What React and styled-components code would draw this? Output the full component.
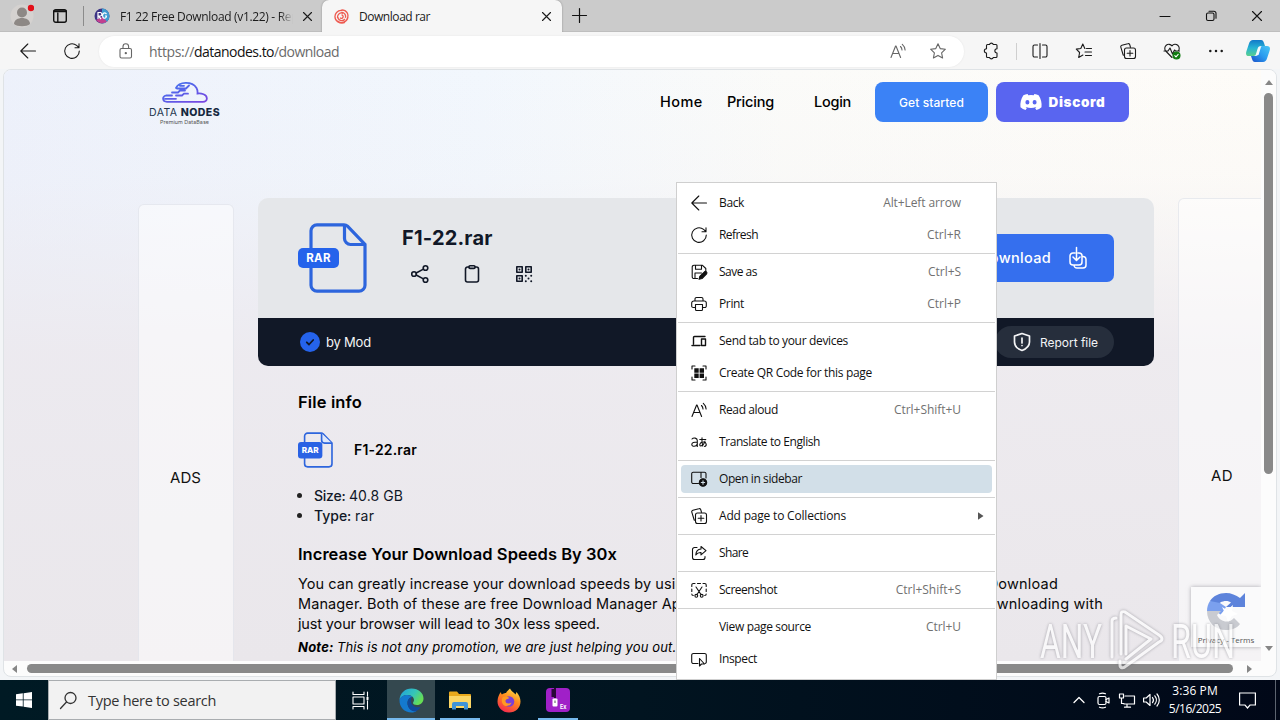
import React from "react";
import styled, { createGlobalStyle, css } from "styled-components";

const UI = '"Open Sans", "Noto Sans", sans-serif';
const GEO = 'Inter, "Open Sans", sans-serif';

const Global = createGlobalStyle`
  * { box-sizing: border-box; }
  body { margin: 0; background: #fff; overflow: hidden; }
  #root { width: 1280px; height: 720px; overflow: hidden; }
`;

/* ---------- shared ---------- */
const Screen = styled.div`
  position: relative; width: 1280px; height: 720px; display: flex; flex-direction: column;
  background: #f3f5f7; font-family: ${UI}; color: #111; overflow: hidden;
`;
const Slot = styled.div`
  width: ${(p) => p.$w}px; height: 100%; flex: none; display: flex; align-items: center; justify-content: center;
`;
const Label = styled.span`
  white-space: pre; letter-spacing: ${(p) => p.$ls || 0}px;
`;
const Svg = styled.svg`
  display: block; flex: none; overflow: visible; fill: none; stroke: currentColor;
  stroke-width: ${(p) => p.$sw || 1.1}; stroke-linecap: round; stroke-linejoin: round;
`;
const Icon = ({ s = 16, h, sw, children }) => (
  <Svg width={s} height={h || s} viewBox={`0 0 ${s} ${h || s}`} $sw={sw}>{children}</Svg>
);

/* ---------- tab strip ---------- */
const TabStrip = styled.div`
  height: 32px; flex: none; display: flex; background: #cbcbcb; border-bottom: 1px solid #bebebe;
`;
const StripLine = styled.div` width: 1px; height: 20px; margin: 0 0 0 -1px; background: #8b8b8b; `;
const Tab = styled.div`
  height: 32px; width: ${(p) => p.$w}px; flex: none; display: flex; align-items: center; font-size: 12px; color: #1b1b1b;
  padding-left: ${(p) => p.$pl}px; padding-right: ${(p) => p.$pr}px;
  ${(p) => p.$active && css` background: #f6f6f6; border-radius: 7px 7px 0 0; box-shadow: 0 0 2px rgba(0,0,0,.35); clip-path: inset(0 -3px 0 -3px); `}
`;
const TabTitle = styled.div`
  flex: 1; margin-left: 10px; overflow: hidden; white-space: nowrap;
  ${(p) => p.$fade && css` mask-image: linear-gradient(90deg, #000 92%, transparent); `}
`;
const WindowButtons = styled.div` margin-left: auto; display: flex; `;

/* ---------- toolbar ---------- */
const Toolbar = styled.div`
  height: 37px; flex: none; display: flex; align-items: center; background: #f6f6f6; color: #1b1b1b; padding: 2px 0 1px;
`;
const AddressBar = styled.div`
  width: 865px; height: 31px; margin-right: 5px; border-radius: 16px; background: #fff; display: flex; align-items: center;
  box-shadow: 0 0 2px rgba(0,0,0,.08); padding-left: 20px; color: #666; font-size: 14px;
`;
const Url = styled.div` margin-left: 16px; flex: 1; color: #6b6b6b; b { font-weight: 400; color: #111; } `;
const ToolLine = styled.div` width: 1px; height: 17px; margin: 0 0 0 1px; background: #cfcfcf; `;

/* ---------- page frame ---------- */
const Frame = styled.div`
  width: 1274px; height: 608px; flex: none; margin: 0 0 0 3px; border: 1px solid #dfe3e6; border-radius: 8px; background: #fcfcfc;
  overflow: hidden; display: grid; grid-template-columns: 1257px 15px; grid-template-rows: 591px 15px;
`;
const Page = styled.div`
  overflow: hidden; color: #000; font-family: ${GEO}; position: relative;
  background:
    linear-gradient(180deg, rgba(236,233,237,0) 0%, rgba(236,233,237,.12) 18%, rgba(236,233,238,.9) 48%, rgba(234,231,235,1) 100%),
    linear-gradient(90deg, #edf1fb 0%, #f2f7fd 38%, #fbfbf9 62%, #fefcf8 100%);
`;
const VBar = styled.div`
  display: flex; flex-direction: column; align-items: center; padding-top: 10px; background: #fcfcfc;
`;
const HBar = styled.div` display: flex; align-items: center; padding-left: 8px; `;
const Thumb = styled.div`
  background: #898989; border-radius: 5px; width: ${(p) => p.$w}px; height: ${(p) => p.$h}px; margin: ${(p) => p.$m};
`;
const Arrow = styled.div`
  width: 0; height: 0; border: 4.5px solid transparent;
  ${(p) => p.$d === "up" && css` border-top: 0; border-bottom: 5px solid #868686; `}
  ${(p) => p.$d === "down" && css` border-bottom: 0; border-top: 5px solid #868686; `}
  ${(p) => p.$d === "left" && css` border-left: 0; border-right: 5px solid #868686; `}
  ${(p) => p.$d === "right" && css` border-right: 0; border-left: 5px solid #868686; `}
`;

const SiteHeader = styled.header`
  width: 1125px; height: 64px; padding-left: 145px; display: flex; align-items: center;
`;
const Brand = styled.div`
  width: 71px; display: flex; flex-direction: column; align-items: center; margin-top: 3px;
`;
const BrandName = styled.div`
  font: 400 10.5px/12px ${GEO}; color: #24364e; white-space: nowrap; margin-top: 4px; b { font-weight: 800; color: #16283f; }
`;
const BrandTag = styled.div` font: 400 5.4px/7px ${GEO}; color: #555; white-space: nowrap; `;
const Nav = styled.nav` margin-left: auto; display: flex; align-items: center; font-size: 14.5px; font-weight: 500; `;
const NavLink = styled.a` margin: -2px ${(p) => p.$gap}px 0 0; white-space: nowrap; `;
const CtaButton = styled.a`
  width: ${(p) => p.$w}px; height: 40px; border-radius: 8px; background: ${(p) => p.$bg}; color: #fff; margin-right: ${(p) => p.$mr || 0}px;
  display: flex; align-items: center; justify-content: center; gap: 7px; font-size: 12px; font-weight: 500;
  b { font-size: 13.5px; font-weight: 900; margin-top: -1px; }
`;

const Columns = styled.div` display: flex; gap: 24px; align-items: flex-start; margin: 64px 0 0 134px; width: 1200px; `;
const AdPanel = styled.aside`
  width: 96px; height: ${(p) => p.$h}px; margin-top: ${(p) => p.$mt}px; flex: none; border-radius: 6px; display: flex; align-items: center;
  padding-left: ${(p) => p.$pl}px; font-size: 15px; color: #111; background: rgba(255,255,255,.52); border: 1px solid rgba(215,219,228,.55);
`;
const Main = styled.main` width: 896px; flex: none; `;
const Card = styled.section` border-radius: 10px; overflow: hidden; `;
const CardTop = styled.div`
  height: 120px; background: #e5e7ea; display: flex; align-items: flex-start; padding: 25px 40px 0; color: #111827;
`;
const FileHead = styled.div` margin: 2px 0 0 35px; `;
const FileTitle = styled.h1` margin: 0; font: 700 20px/26px ${GEO}; `;
const Actions = styled.div` display: flex; gap: 32px; padding: 13px 0 0 8px; `;
const DownloadButton = styled.a`
  width: 180px; height: 48px; margin: 11px 0 0 auto; border-radius: 7px; background: #356fee; color: #fff; font-size: 14.5px; font-weight: 500;
  display: flex; align-items: center; justify-content: flex-end; padding-right: 27px; gap: 18px;
  span { margin-top: -1px; }
`;
const CardBar = styled.div`
  height: 48px; background: #111827; color: #f3f4f6; display: flex; align-items: center; padding: 0 40px 0 42px; font-size: 13px;
`;
const Check = styled.div`
  width: 20px; height: 20px; border-radius: 50%; background: #2563eb; color: #111827; display: flex; align-items: center; justify-content: center; margin-right: 6px;
`;
const ReportPill = styled.a`
  margin-left: auto; width: 119px; height: 32px; border-radius: 16px; background: #262e3c; display: flex; align-items: center; padding-left: 18px; gap: 9px; font-size: 12px;
`;
const Details = styled.section` padding: 24px 0 0 40px; `;
const SubHead = styled.h2` margin: ${(p) => p.$mt || 0}px 0 0; font: 600 16.5px/24px ${GEO}; `;
const FileRow = styled.div`
  height: 36px; margin-top: 18px; display: flex; align-items: center; gap: 21px; font-size: 14px; font-weight: 600;
  span { margin-top: -1px; }
`;
const Facts = styled.ul`
  list-style: none; margin: 18px 0 0; padding: 0; font-size: 14px; line-height: 20px; color: #111827;
  li { display: flex; align-items: center; white-space: pre; }
  li::before { content: ""; width: 5px; height: 5px; border-radius: 50%; background: #222; margin: 0 12px 2px -1px; }
  b { font-weight: 500; }
`;
const Copy = styled.div` margin-top: 8px; font-size: 14.5px; line-height: 20px; color: #0a0a0a; `;
const CopyLine = styled.div` display: flex; justify-content: space-between; width: ${(p) => p.$w}px; `;
const Note = styled.div` margin-top: 3px; font: italic 400 13px/20px ${GEO}; white-space: pre; b { font-weight: 700; } `;
const Captcha = styled.div`
  position: absolute; right: 0; bottom: 14px; width: 70px; height: 60px; background: #fafafb; box-shadow: 0 0 4px rgba(120,120,130,.6);
  display: flex; flex-direction: column; align-items: center; padding-top: 6px; font: 400 8px/10px ${UI}; color: #555; gap: 5px;
`;

/* ---------- context menu ---------- */
const Menu = styled.div`
  position: absolute; left: 676px; top: 182px; width: 321px; height: 498px; background: #fff; border: 1px solid #cfcfcf;
  padding-top: 4px; font-size: 12px; color: #111; display: flex; flex-direction: column;
`;
const MenuItem = styled.div`
  height: ${(p) => (p.$on ? 28 : 32)}px; flex: none; display: flex; align-items: center; margin: ${(p) => (p.$on ? "2px 4px" : "0 4px")};
  padding: 0 ${(p) => (p.$sub ? 7 : 31)}px 0 10px; border-radius: 4px; background: ${(p) => (p.$on ? "#d2dfe8" : "transparent")};
`;
const MenuText = styled.div` margin: -1px 0 0 12px; flex: 1; white-space: nowrap; `;
const Shortcut = styled.div` margin-top: -1px; color: #717171; white-space: nowrap; `;
const Separator = styled.div` height: 1px; flex: none; margin: 2px 1px; background: #d2d2d2; `;

/* ---------- task bar ---------- */
const TaskBar = styled.div`
  height: 40px; margin-top: auto; display: flex; background: linear-gradient(90deg, #001a24, #011420 50%, #010818); color: #fff;
`;
const SearchBox = styled.div`
  width: 288px; height: 40px; background: #f2f2f2; border: 1px solid #a9adb0; color: #333; display: flex; align-items: center; padding-left: 11px; gap: 11px; font-size: 14.5px;
`;
const TaskButton = styled.div`
  width: ${(p) => p.$w}px; margin: 0 ${(p) => p.$mr || 0}px 0 0; height: 40px; display: flex; align-items: center; justify-content: center;
  background: ${(p) => (p.$on ? "#34484f" : "transparent")}; border-bottom: 2px solid ${(p) => (p.$run ? "#76b9ed" : "transparent")}; padding-top: 2px;
`;
const Tray = styled.div` margin-left: auto; display: flex; align-items: center; `;
const Clock = styled.div`
  width: 60px; text-align: center; font-size: 12px; line-height: 18px; display: flex; flex-direction: column; align-items: center;
`;
const Peek = styled.div` width: 5px; height: 40px; border-left: 1px solid #5c6470; `;

const Watermark = styled.div` position: absolute; left: 1036px; top: 606px; width: 202px; height: 68px; opacity: .7; filter: drop-shadow(0 0 1.5px rgba(100,100,110,.75)); `;

/* ---------- drawings ---------- */
const RarIcon = ({ w, h, small }) => (
  <svg width={w} height={h} viewBox="0 0 69 70">
    <path d="M46 1.8H19a6 6 0 0 0-6 6v54.4a6 6 0 0 0 6 6h42a6 6 0 0 0 6-6V21.5L49.5 3.2a5 5 0 0 0-3.5-1.4z" fill="none" stroke="#2d65dd" strokeWidth="3.2" />
    <path d="M46.5 2v13.5a6 6 0 0 0 6 6H67" fill={small ? "#dfe8fb" : "none"} stroke="#2d65dd" strokeWidth="3.2" />
    {small
      ? <><rect x="0" y="19" width="48" height="33" rx="6" fill="#2a62e4" /><text x="24" y="41.5" textAnchor="middle" fontFamily="Inter" fontWeight="800" fontSize="16" fill="#fff">RAR</text></>
      : <><rect x="0" y="25" width="41" height="20" rx="5" fill="#2563eb" /><text x="20.5" y="39" textAnchor="middle" fontFamily="Inter" fontWeight="700" fontSize="11.5" letterSpacing=".3" fill="#fff">RAR</text></>}
  </svg>
);
const BackIcon = () => <Icon s={16}><path d="M15.5 8H.8M7.8 1L.8 8l7 7" /></Icon>;
const RefreshIcon = () => <Icon s={16}><path d="M15.3 8A7.3 7.3 0 1 1 12.6 2.4L15 4.6M15 .8v3.9h-4" /></Icon>;
const ReadIcon = () => <Icon s={16}><path d="M1 14.500L5.600 3h.4l4.600 11.500M2.600 10.500h6.500M10.500 3.500a5 5 0 0 1 1.500 3.500M12.300 1.300a8 8 0 0 1 2.800 5.700" /></Icon>;
const StarIcon = () => <Icon s={16}><path d="M8 .8l2.200 4.800 5.200.6-3.800 3.600 1 5.200L8 12.400 3.400 15l1-5.200L.6 6.200l5.200-.6z" /></Icon>;
const CollIcon = () => <Icon s={16}><path d="M4.500 12.500L3.200 12 .8 4.200a1.600 1.600 0 0 1 1.100-2L7.800.7a1.600 1.600 0 0 1 2 1.100L10.400 4M6.500 5h7a2 2 0 0 1 2 2v6.500a2 2 0 0 1-2 2h-7a2 2 0 0 1-2-2V7a2 2 0 0 1 2-2zM10 7.500v5.500M7.200 10.200h5.600" /></Icon>;
const CloseIcon = ({ s = 9 }) => <Icon s={s}><path d={`M.5.5l${s - 1} ${s - 1}M${s - .5}.5l-${s - 1} ${s - 1}`} /></Icon>;

const menuIcons = {
  save: <Icon s={16}><path d="M6.500 14.500H3A1.700 1.700 0 0 1 1.200 12.800V3A1.700 1.700 0 0 1 3 1.300h8.500L14.800 4.500V7M4.500 1.500v3.700h6V1.500M4 14.300V9h6.500" /><path d="M8 15.300l.8-3 4.700-4.500a1.500 1.500 0 0 1 2.100 2.100L11 14.500z" fill="currentColor" /></Icon>,
  print: <Icon s={16}><path d="M4 5V3a1.500 1.500 0 0 1 1.500-1.500h5A1.500 1.500 0 0 1 12 3v2M4 11.500H2.500A1.500 1.500 0 0 1 .7 10V7a2 2 0 0 1 2-2h10.600a2 2 0 0 1 2 2v3a1.500 1.500 0 0 1-1.500 1.500H12M4.500 8.500h7v5a1 1 0 0 1-1 1h-5a1 1 0 0 1-1-1z" /></Icon>,
  send: <Icon s={16} sw={1.4}><path d="M2.500 11V4.500a1 1 0 0 1 1-1H14M1 12.500h8M10.500 6h4v6.500h-4z" /></Icon>,
  qr: <Icon s={16}><path d="M1 4V1h3M12 1h3v3M15 12v3h-3M4 15H1v-3" /><path d="M3.300 3.300h4.400v4.400H3.300zM8.600 3.300H13v4.400H8.600zM3.300 8.600h4.400V13H3.300zM8.600 8.600H13V13H8.600z" fill="currentColor" stroke="none" /></Icon>,
  translate: <Icon s={16}><path d="M1 5C2.500 3.300 6.300 3.800 6.300 6.500v6M6.300 8C3 8 .8 8.800.8 10.500.8 13 5.300 13 6.300 10M8.800 5.500h6M11 3.800c-.3 3 0 6 .8 8.200M14 7c-.5 2.500-2.500 5-4.300 5-1.700-.3-1-4 2.300-4 4-.2 4 4 1.500 4.500" /></Icon>,
  sidebar: <Icon s={16}><path d="M7.500 12.500H2.300A1.500 1.500 0 0 1 .7 11V2.800A1.500 1.500 0 0 1 2.300 1.300h11A1.500 1.500 0 0 1 15 2.800V7M10 1.500v5" /><circle cx="12" cy="11.500" r="3.700" fill="currentColor" /><path d="M12 9.800v3.400M10.300 11.500h3.400" stroke="#d2dfe8" /></Icon>,
  share: <Icon s={16}><path d="M6 2.500H3.500A2 2 0 0 0 1.500 4.500v8a2 2 0 0 0 2 2h8.500a2 2 0 0 0 2-2V11.500M10 1.500l5 4.200-5 4.200V7.500C7.500 7.300 6 8.300 4.800 10 5 6.500 7 4.200 10 4z" /></Icon>,
  shot: <Icon s={16}><path d="M.8 4.500V3a1.500 1.500 0 0 1 1.500-1.500H4M6.500 1.500h3M12 1.500h1.700A1.500 1.500 0 0 1 15.200 3v1.500M15.200 7v2.500M.8 7v2.500M.8 12c0 1 .5 1.500 1.500 1.500M15.200 12c0 1-.5 1.500-1.500 1.500M5 5l5 7.500M11 5l-5 7.500" /><circle cx="5.300" cy="13.800" r="1.400" /><circle cx="10.700" cy="13.800" r="1.400" /></Icon>,
  inspect: <Icon s={16}><path d="M7 12.500H2.500A1.700 1.700 0 0 1 .7 10.800V4.200a1.700 1.700 0 0 1 1.800-1.700h11a1.700 1.700 0 0 1 1.800 1.700v6.600a1.500 1.500 0 0 1-1.300 1.700" /><path d="M8.500 7.500v7.500l2-2h3z" fill="#fff" /></Icon>,
};

/* icon, text, text spacing, shortcut, shortcut spacing; null is a divider */
const menu = [
  { icon: <BackIcon />, text: "Back", ls: -0.37, keys: "Alt+Left arrow", kls: -0.1 },
  { icon: <RefreshIcon />, text: "Refresh", ls: -0.56, keys: "Ctrl+R", kls: -0.01 },
  null,
  { icon: menuIcons.save, text: "Save as", ls: -0.5, keys: "Ctrl+S", kls: -0.04 },
  { icon: menuIcons.print, text: "Print", ls: -0.36, keys: "Ctrl+P", kls: 0 },
  null,
  { icon: menuIcons.send, text: "Send tab to your devices", ls: -0.34 },
  { icon: menuIcons.qr, text: "Create QR Code for this page", ls: -0.32 },
  null,
  { icon: <ReadIcon />, text: "Read aloud", ls: -0.39, keys: "Ctrl+Shift+U", kls: -0.04 },
  { icon: menuIcons.translate, text: "Translate to English", ls: -0.42 },
  null,
  { icon: menuIcons.sidebar, text: "Open in sidebar", ls: -0.41, on: true },
  null,
  { icon: <CollIcon />, text: "Add page to Collections", ls: -0.19, sub: true },
  null,
  { icon: menuIcons.share, text: "Share", ls: -0.6 },
  null,
  { icon: menuIcons.shot, text: "Screenshot", ls: -0.47, keys: "Ctrl+Shift+S", kls: 0 },
  null,
  { icon: <Slot $w={16} />, text: "View page source", ls: -0.34, keys: "Ctrl+U", kls: -0.05 },
  { icon: menuIcons.inspect, text: "Inspect", ls: -0.36 },
];

export default function App() {
  return (
    <>
      <Global />
      <Screen>
        <TabStrip>
          <Slot $w={44}>
            <svg width="24" height="24" viewBox="0 0 24 24"><circle cx="12" cy="12" r="11.500" fill="#d5d2d0" /><circle cx="12" cy="8.500" r="5" fill="#8d8885" /><path d="M4 20c0-8 16-8 16 0-3 3-13 3-16 0z" fill="#8d8885" /><circle cx="21" cy="4" r="3.200" fill="#e3101a" /></svg>
          </Slot>
          <Slot $w={32}>
            <Icon s={14} h={14} sw={1.4}><rect x=".7" y=".7" width="12.600" height="12.600" rx="2" /><path d="M1 2.200h12" strokeWidth="2" /><path d="M4.800 4v9" /></Icon>
          </Slot>
          <Slot $w={16}><StripLine /></Slot>
          <Tab $w={230} $pl={2} $pr={10}>
            <svg width="16" height="16" viewBox="0 0 16 16"><circle cx="8" cy="8" r="7.500" fill="#3d3485" /><path d="M8 .5a7.500 7.500 0 0 1 0 15z" fill="#3f9cd0" /><path d="M2 12A7.500 7.500 0 0 0 13 13.500L8 9z" fill="#c2408f" /><path d="M4 11V4.500h2.500a1.800 1.800 0 0 1 0 3.500H4.500L7 11M12.500 6C10 3.500 7.500 6 9 9.500c1.500 1.500 3.500.5 3.500-1.500H11" fill="none" stroke="#fff" strokeWidth="1.200" /></svg>
            <TabTitle $fade><Label $ls={-0.33}>F1 22 Free Download (v1.22) - Repack</Label></TabTitle>
            <Slot $w={10} />
            <CloseIcon />
          </Tab>
          <Tab $w={240} $pl={12} $pr={11} $active>
            <svg width="15" height="15" viewBox="0 0 15 15" fill="none" stroke="#ee5a50" strokeWidth="1.300"><path d="M7.500.8c5-.3 8 5 5.500 9M14 8c-1 5-7 7.500-10.500 4M11 13.500C6 15.500.5 12 1 7M1.500 10C-.5 5 4 .5 8.500 1.500M7.500 3.300a4 4 0 0 1 3.800 5.500M11 10c-2.500 3-7 1.500-7.200-2M3.600 9C3 5 6.500 3 9 4.500M7.500 5.800a1.800 1.800 0 1 1-1.500 3" /></svg>
            <TabTitle><Label $ls={-0.45}>Download rar</Label></TabTitle>
            <CloseIcon />
          </Tab>
          <Slot $w={34}><Icon s={15} sw={1.200}><path d="M.5 7.500h14M7.500.5v14" /></Icon></Slot>
          <WindowButtons>
            <Slot $w={46}><Icon s={10}><path d="M0 5.500h10" /></Icon></Slot>
            <Slot $w={46}><Icon s={10}><rect x=".5" y="2" width="7.500" height="7.500" rx="1.500" /><path d="M3 .3h5a2 2 0 0 1 2 2v5" /></Icon></Slot>
            <Slot $w={46}><CloseIcon s={10} /></Slot>
          </WindowButtons>
        </TabStrip>

        <Toolbar>
          <Slot $w={55}><BackIcon /></Slot>
          <Slot $w={34}><RefreshIcon /></Slot>
          <Slot $w={10} />
          <AddressBar>
            <Icon s={14} h={16}><rect x="1" y="5.500" width="11.500" height="9.500" rx="1.500" /><path d="M4 5.300V3.500a2.800 2.800 0 0 1 5.600 0v1.800" /><circle cx="6.800" cy="10.200" r=".6" fill="currentColor" /></Icon>
            <Url><Label $ls={-0.34}>https://</Label><b><Label $ls={-0.53}>datanodes.to</Label></b><Label $ls={-0.54}>/download</Label></Url>
            <Slot $w={40}><ReadIcon /></Slot>
            <Slot $w={40}><StarIcon /></Slot>
            <Slot $w={6} />
          </AddressBar>
          <Slot $w={44}>
            <Icon s={16}><path d="M4.500 1.500h2a2 2 0 0 1 3.800 0H13a1 1 0 0 1 1 1V5.700a2.100 2.100 0 1 0 0 4.300V13.500a1 1 0 0 1-1 1H10.300a2 2 0 0 1-3.800 0H4.500a1 1 0 0 1-1-1V10A2.100 2.100 0 0 1 3.500 5.700V2.500a1 1 0 0 1 1-1z" /></Icon>
          </Slot>
          <Slot $w={5}><ToolLine /></Slot>
          <Slot $w={44}><Icon s={16}><path d="M5.500 2H2.500A1.500 1.500 0 0 0 1 3.500v9A1.500 1.500 0 0 0 2.500 14h3M10.500 2h3A1.500 1.500 0 0 1 15 3.500v9a1.500 1.500 0 0 1-1.500 1.500h-3M8 .5v15" /></Icon></Slot>
          <Slot $w={44}><Icon s={16}><path d="M9 5.500H8.800L6.800 1 4.800 5.500l-4.500.6L3.600 9.500l-.9 5 4.200-2.400M10.500 5.500h5M9 9h6.500M9.500 12.500h6" /></Icon></Slot>
          <Slot $w={44}><CollIcon /></Slot>
          <Slot $w={44}><Icon s={16}><path d="M8 14.500L1.700 8A4 4 0 0 1 8 2.800 4 4 0 0 1 14.300 8M0 8h4l2-3 2.500 6L10.500 7l1 1h4" /><circle cx="12.500" cy="12.500" r="3.500" fill="#107c10" stroke="#107c10" /><path d="M10.800 12.600l1.200 1.200 2.200-2.400" stroke="#fff" /></Icon></Slot>
          <Slot $w={44}><Icon s={16}><path d="M2.300 8h.01M8 8h.01M13.700 8h.01" strokeWidth="2.500" /></Icon></Slot>
          <Slot $w={40}>
            <svg width="24" height="22" viewBox="0 0 24 22">
              <defs>
                <linearGradient id="ca" x1="0" y1="0" x2="0" y2="1"><stop offset="0" stopColor="#1279c9" /><stop offset=".5" stopColor="#27b4d4" /><stop offset="1" stopColor="#5ad08e" /></linearGradient>
                <linearGradient id="cb" x1="1" y1="0" x2="0" y2="1"><stop offset="0" stopColor="#49c7f4" /><stop offset=".5" stopColor="#2a9bef" /><stop offset="1" stopColor="#1b50c8" /></linearGradient>
              </defs>
              <path d="M7 0h8c2 0 2.500 1.500 3 3l1 3h-4c-2 0-3 1-3.500 3l-1.500 5c-.5 1.500-1.500 2-3 2H3c-3 0-3.500-2-2.500-5L3 3.500C3.700 1.200 5 0 7 0z" fill="url(#ca)" />
              <path d="M17 22H9c-2 0-2.500-1.500-3-3l-1-3h4c2 0 3-1 3.500-3L14 8c.5-1.500 1.500-2 3-2h4c3 0 3.500 2 2.500 5L21 18.500c-.7 2.300-2 3.500-4 3.500z" fill="url(#cb)" />
              <path d="M12.500 7.500L15 7l-2.500 8-2.500.6z" fill="#f4fbff" />
            </svg>
          </Slot>
        </Toolbar>

        <Frame>
          <Page>
            <SiteHeader>
              <Brand>
                <svg width="46" height="21" viewBox="0 0 46 21" fill="none" strokeLinecap="round" strokeWidth="1.800">
                  <defs><linearGradient id="cl" x1="0" y1="0" x2="1" y2="1"><stop offset="0" stopColor="#3d78f0" /><stop offset="1" stopColor="#7a45e0" /></linearGradient></defs>
                  <path stroke="url(#cl)" d="M14 6C17-.5 30-1 34.500 6c1 1.800 1.200 3.500 1 5.500 4-.5 9 1 9.300 4.500.3 2.500-1.500 3.800-4 3.800H5C0 19.800 0 14.500 4 13.500h6M3 16.800h11M10 10.500h6l2-2h5M15 6.500h9l3-3M18 3.800h4M14 13.500h6l2-1.800h4" />
                </svg>
                <BrandName><Label $ls={0.43}>DATA <b>NODES</b></Label></BrandName>
                <BrandTag><Label $ls={0.05}>Premium DataBase</Label></BrandTag>
              </Brand>
              <Nav>
                <NavLink $gap={24}><Label $ls={0.5}>Home</Label></NavLink>
                <NavLink $gap={40}><Label $ls={-0.2}>Pricing</Label></NavLink>
                <NavLink $gap={24}><Label $ls={-0.26}>Login</Label></NavLink>
                <CtaButton $w={113} $bg="#3b82f6" $mr={8}><Label $ls={0.09}>Get started</Label></CtaButton>
                <CtaButton $w={133} $bg="#5965f0">
                  <svg width="22" height="16" viewBox="0 0 22 16"><path fill="#fff" fillRule="evenodd" d="M7.600 0l.7 1.300a15 15 0 0 1 5.400 0L14.400 0c1.600.3 3 .7 4.200 1.300C21 5 22 9 21.500 13.200A16 16 0 0 1 16.400 16l-1.300-2 1.200-.7-.3-.2c-3.200 1.300-6.800 1.300-10 0l-.3.2 1.200.7-1.300 2a16 16 0 0 1-5.100-2.800C0 9 1 5 3.400 1.300 4.600.7 6 .3 7.600 0zM7.400 6a2 2.200 0 1 0 0 4.400 2 2.200 0 0 0 0-4.400zm7.200 0a2 2.200 0 1 0 0 4.400 2 2.200 0 0 0 0-4.400z" /></svg>
                  <b><Label $ls={0.65}>Discord</Label></b>
                </CtaButton>
              </Nav>
            </SiteHeader>

            <Columns>
              <AdPanel $h={546} $mt={6} $pl={31}><Label $ls={0.06}>ADS</Label></AdPanel>
              <Main>
                <Card>
                  <CardTop>
                    <RarIcon w={69} h={70} />
                    <FileHead>
                      <FileTitle><Label $ls={0.2}>F1-22.rar</Label></FileTitle>
                      <Actions>
                        <Icon s={20} sw={1.600}><circle cx="4" cy="10" r="2.300" /><circle cx="15.500" cy="4" r="2.300" /><circle cx="15.500" cy="16" r="2.300" /><path d="M6.200 9l7.200-3.900M6.200 11l7.200 3.900" /></Icon>
                        <Icon s={20} sw={1.600}><path d="M7 3H5.500A2 2 0 0 0 3.500 5v11a2 2 0 0 0 2 2h9a2 2 0 0 0 2-2V5a2 2 0 0 0-2-2H13" /><rect x="7" y="1.800" width="6" height="2.600" rx="1" /></Icon>
                        <Icon s={20} sw={1.600}><rect x="2.800" y="2.800" width="5.400" height="5.400" /><rect x="11.800" y="2.800" width="5.400" height="5.400" /><rect x="2.800" y="11.800" width="5.400" height="5.400" /><path d="M5.500 5.500h.01M14.500 5.500h.01M5.500 14.500h.01M11.800 11.800h.01M14.500 14.400h.01M17.200 11.800h.01M11.800 17.200h.01M17.200 17.200h.01" strokeWidth="2" /></Icon>
                      </Actions>
                    </FileHead>
                    <DownloadButton>
                      <Label $ls={0.3}>Download</Label>
                      <Icon s={18} h={24} sw={1.500}><path d="M6 7H4a3 3 0 0 0-3 3v6a3 3 0 0 0 3 3h6a3 3 0 0 0 3-3v-6a3 3 0 0 0-3-3H9M7.500 1.500V14M4 11l3.500 3.500L11 11M13.500 10.500a3 3 0 0 1 3.500 3V19a3 3 0 0 1-3 3H8a3 3 0 0 1-3-2.500" /></Icon>
                    </DownloadButton>
                  </CardTop>
                  <CardBar>
                    <Check><Icon s={10} sw={1.800}><path d="M1.800 5.300l2.200 2.200L8.200 3" /></Icon></Check>
                    <Label $ls={-0.2}>by Mod</Label>
                    <ReportPill>
                      <Icon s={18} h={20} sw={1.700}><path d="M9 1.500L16.500 4v6c0 4.500-3.500 7-7.500 8.500C5 17 1.500 14.500 1.500 10V4zM9 6v5M9 13.500v.01" /></Icon>
                      <Label $ls={-0.03}>Report file</Label>
                    </ReportPill>
                  </CardBar>
                </Card>
                <Details>
                  <SubHead><Label $ls={0.13}>File info</Label></SubHead>
                  <FileRow><RarIcon w={35} h={36} small /><Label $ls={0.19}>F1-22.rar</Label></FileRow>
                  <Facts>
                    <li><b><Label $ls={-0.23}>Size: </Label></b><Label $ls={0.08}>40.8 GB</Label></li>
                    <li><b><Label $ls={-0.03}>Type: </Label></b><Label $ls={0.3}>rar</Label></li>
                  </Facts>
                  <SubHead $mt={16}><Label $ls={0.04}>Increase Your Download Speeds By 30x</Label></SubHead>
                  <Copy>
                    <CopyLine $w={760}><Label $ls={0.07}>You can greatly increase your download speeds by using</Label><Label $ls={0.2}>Download</Label></CopyLine>
                    <CopyLine $w={805}><Label $ls={0.1}>Manager. Both of these are free Download Manager App</Label><Label $ls={0.2}>downloading with</Label></CopyLine>
                    <CopyLine $w={805}><Label $ls={-0.14}>just your browser will lead to 30x less speed.</Label></CopyLine>
                  </Copy>
                  <Note><b><Label $ls={0.23}>Note: </Label></b><Label $ls={0.12}>This is not any promotion, we are just helping you out.</Label></Note>
                </Details>
              </Main>
              <AdPanel $h={554} $mt={0} $pl={32}><Label $ls={0.41}>AD</Label></AdPanel>
            </Columns>
            <Captcha>
              <svg width="38" height="37" viewBox="0 0 38 37"><path d="M19 0C12 0 6 3 3 8l7 6c1-4 5-6 9-6 2 0 4 .6 5 1.500L19 14h19V0l-5 5C29 2 24 0 19 0z" fill="#5d83db" /><path d="M3 8C1 11 0 14 0 18h9l5 4 5-8-6-4z" fill="#7ba0ee" /><path d="M0 18c0 11 8 19 19 19 6 0 11-2 14-6l-6-6c-5 6-14 4-17-3l4-4z" fill="#c9cbd1" /><path d="M15 14l5 3 6-5-1 6 6 3-6 2-4 6-2-6-6-1 4-4z" fill="#fff" /></svg>
              <Label>Privacy - Terms</Label>
            </Captcha>
          </Page>
          <VBar><Arrow $d="up" /><Thumb $w={9} $h={381} $m="8px 0 172px" /><Arrow $d="down" /></VBar>
          <HBar><Arrow $d="left" /><Thumb $w={1206} $h={9} $m="0 14px 0 10px" /><Arrow $d="right" /></HBar>
        </Frame>

        <Menu>
          {menu.map((m, i) => m ? (
            <MenuItem key={i} $on={m.on} $sub={m.sub}>
              {m.icon}
              <MenuText><Label $ls={m.ls}>{m.text}</Label></MenuText>
              {m.sub && <Icon s={8} h={8}><path d="M1 .2v7.600L6.500 4z" fill="#555" stroke="none" /></Icon>}
              {m.keys && <Shortcut><Label $ls={m.kls}>{m.keys}</Label></Shortcut>}
            </MenuItem>
          ) : <Separator key={i} />)}
        </Menu>

        <Watermark>
          <svg width="202" height="68" viewBox="0 0 202 68" fill="none" stroke="#fff" strokeLinejoin="round" strokeLinecap="round">
            <text x="4" y="51.500" textLength="62" lengthAdjust="spacingAndGlyphs" fontFamily="Roboto" fontWeight="400" fontSize="49" fill="#fff" stroke="none">ANY</text>
            <text x="135" y="51.500" textLength="64" lengthAdjust="spacingAndGlyphs" fontFamily="Roboto" fontWeight="400" fontSize="49" fill="#fff" stroke="none">RUN</text>
            <path d="M80 12c-3 0-4 1-4 3v36M85 48V9c0-3 1-4 4-3l34 23c4 3 4 5 0 7L90 60c-3 3-6 2-6-1v-4M90 48V20l25 13-25 20" strokeWidth="3" />
          </svg>
        </Watermark>

        <TaskBar>
          <TaskButton $w={48}><svg width="16" height="16" viewBox="0 0 16 16" fill="#fff"><path d="M0 2.300L6.800 1.300v6.200H0zM7.600 1.200L16 0v7.500H7.600zM0 8.300h6.800v6.300L0 13.700zM7.600 8.300H16V16l-8.400-1.200z" /></svg></TaskButton>
          <SearchBox>
            <Icon s={17} sw={1.300}><circle cx="10.500" cy="6" r="5.500" /><path d="M6.500 10L.5 16.500" /></Icon>
            <Label $ls={-0.28}>Type here to search</Label>
          </SearchBox>
          <TaskButton $w={48} $mr={3}><Icon s={17} sw={1.100}><path d="M1 0v2.500h11V0M1 17v-2.500h11V17M1 5h11v7H1zM15.500 0v4M15.500 9v8" /><path d="M15.500 5.500v2" strokeWidth="2" /></Icon></TaskButton>
          <TaskButton $w={48} $mr={5} $on $run>
            <svg width="25" height="25" viewBox="0 0 25 25">
              <defs><linearGradient id="ed" x1="0" y1="0" x2="1" y2=".5"><stop offset="0" stopColor="#1f9fe0" /><stop offset=".6" stopColor="#35c5b8" /><stop offset="1" stopColor="#66dd55" /></linearGradient></defs>
              <path d="M.5 12C1 5 6 .5 12.500.5 19.500.5 24.500 5 24.500 10.500c0 4-3 6.500-6.500 6.500-2.500 0-4-1-4-2 0-.8 1-1.500 1-3 0-3-3-5-6.500-5C4.500 7 1.500 9 .5 12z" fill="url(#ed)" />
              <path d="M.5 12c1-3.500 4-5 8-5 2 0 4 .8 5 2-3 0-5 3-5 6 0 5 4 8.500 9 8-1.500 1-3.500 1.500-5 1.500C5.500 24.500.3 19 .5 12z" fill="#1479cf" />
              <path d="M8.500 15c0-3 2-5.500 4.500-6-1 2-1.500 3-1 5 .8 4 5 6 9.500 5-1 2-3 4-5.500 4.500-4 0-7.500-4-7.500-8.500z" fill="#10489b" />
            </svg>
          </TaskButton>
          <TaskButton $w={40} $mr={5} $run>
            <svg width="22" height="19" viewBox="0 0 22 19"><path d="M0 1.500A1 1 0 0 1 1 .5h7l2 2.500h11a1 1 0 0 1 1 1V17H0z" fill="#e9a91c" /><path d="M0 5h22v12H0z" fill="#fcd665" /><path d="M3 18.500V13a2 2 0 0 1 2-2h12a2 2 0 0 1 2 2v5.500h-4V15H7v3.500z" fill="#3f93d8" /></svg>
          </TaskButton>
          <TaskButton $w={48} $mr={5}>
            <svg width="24" height="25" viewBox="0 0 24 25">
              <defs><linearGradient id="ff" x1=".8" y1="0" x2=".3" y2="1"><stop offset="0" stopColor="#ffe14a" /><stop offset=".45" stopColor="#ff8a1c" /><stop offset="1" stopColor="#f5284f" /></linearGradient></defs>
              <path d="M4 4c0 1 .3 2 1 2.500C6 5.500 8 5 9 5c1-2 3-3.500 4-4.500 1 3 4 3.500 5.500 6L19.500 4C22 7 23.500 10 23.500 13.500c0 6.500-5 11-11.500 11S.5 19.500.5 13.500C.5 10 2 6 4 4z" fill="url(#ff)" /><circle cx="12" cy="13.500" r="5.300" fill="#7a3fd6" /><path d="M6 9c2-1 5-.5 6.500 1-1 1-3.500 1-4 2.500-.5 3 3.500 4 6 2-1 4-7 5-9 1-1-2-1-5 .5-6.500z" fill="#ff9a22" />
            </svg>
          </TaskButton>
          <TaskButton $w={40} $run>
            <svg width="24" height="24" viewBox="0 0 24 24"><rect width="24" height="24" rx="4" fill="#a020c8" /><path d="M9 0v2H6.500v2H9v2H6.500v2H9v2" fill="none" stroke="#2b0838" strokeWidth="2" /><rect x="6.500" y="10.500" width="5" height="8" rx="1" fill="#fff" /><path d="M9 12.500v2.500" stroke="#555" /><text x="14" y="21" fontSize="5.500" fontWeight="700" fontFamily="Inter" fill="#fff">Ex</text></svg>
          </TaskButton>
          <Tray>
            <Slot $w={24}><Icon s={12} h={8} sw={1.300}><path d="M1 6.500l5-5 5 5" /></Icon></Slot>
            <Slot $w={24}><Icon s={13} h={17} sw={1.200}><rect x="1" y="4.500" width="8" height="8" rx="1.500" /><path d="M9 7.500l3-1.500v5L9 9.500M2.500 1.800a8 8 0 0 1 6 0M2.500 15.200a8 8 0 0 0 6 0" /></Icon></Slot>
            <Slot $w={24}><Icon s={16} h={15} sw={1.200}><path d="M6 3h9.500v8H5M8 11.500V14M5.500 14.200h6M.5 1h4v4h-4zM2.500 5v5.500H5" /></Icon></Slot>
            <Slot $w={24}><Icon s={17} h={14} sw={1.200}><path d="M.6 5h2.600L7 1.500v11L3.200 9H.6zM9.500 4.500a4 4 0 0 1 0 5M11.800 2.800a6.500 6.500 0 0 1 0 8.400M14 1a9 9 0 0 1 0 12" /></Icon></Slot>
            <Slot $w={2} />
            <Clock><Label $ls={0.1}>3:36 PM</Label><Label $ls={-0.5}>5/16/2025</Label></Clock>
            <Slot $w={44}><Icon s={17} h={17} sw={1.200}><path d="M.6 1h15.800v12H11l-2.500 3L6 13H.6z" strokeLinejoin="miter" /></Icon></Slot>
            <Slot $w={6} />
            <Peek />
          </Tray>
        </TaskBar>
      </Screen>
    </>
  );
}
